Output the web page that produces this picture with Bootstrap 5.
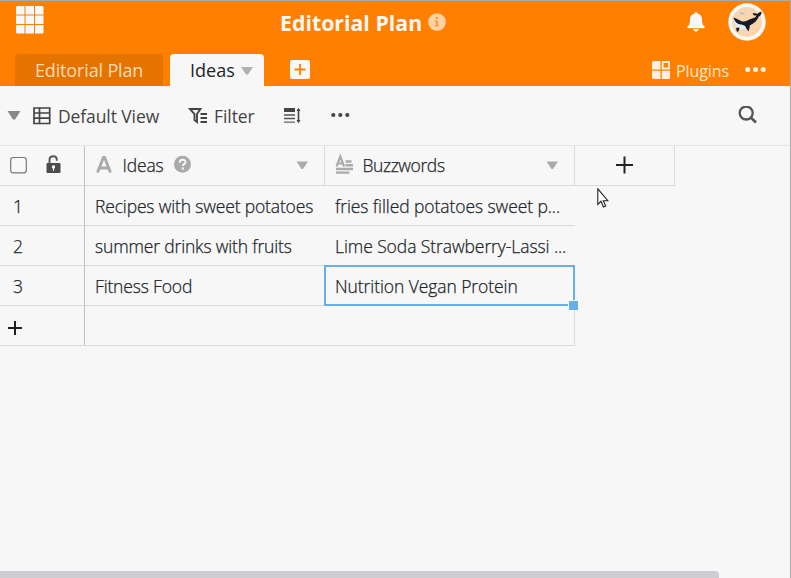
<!DOCTYPE html>
<html lang="en">
<head>
<meta charset="utf-8">
<title>Editorial Plan</title>
<link href="https://cdn.jsdelivr.net/npm/bootstrap@5.3.0/dist/css/bootstrap.min.css" rel="stylesheet">
<style>
body{font-family:"Open Sans","Noto Sans",sans-serif;background:#f7f7f7;color:#212529;font-size:17.5px;line-height:24px}
svg{display:block;flex:none}
.app{width:791px;height:578px;border-top:1px solid #aaa;border-right:1px solid #aaa}
.topbar{background:#ff8000;height:85px}
.brandrow{height:53px}
.brand-side{width:280px}
.apps-icon{margin:5px 0 0 16px}
.doc-title{font-weight:700;font-size:21.3px;color:#f7f7f7;line-height:44px}
.info-icon{margin:12px 0 0 6px}
.bell-icon{margin-top:11px}
.avatar-icon{margin:2px 24px 0 23px}
.tabs{height:32px;padding-left:15px;font-size:18px}
.tab-item{height:32px;border-radius:4px 4px 0 0;line-height:33px}
.tab-plan{width:148px;background:#e57300;color:#ffdcb8;margin-right:7px;padding-left:20px;letter-spacing:-.15px}
.tab-ideas{width:94px;background:#f7f7f7;padding-left:20px}
.tab-arrow{margin:13px 0 0 6px}
.plugins-icon{margin:7px 0 0}
.plugins-label{font-size:16px;line-height:35px;color:#ffe9d2;margin-left:6px;letter-spacing:-.1px}
.tools{height:59px;color:#444;padding-left:7px}
.tools span{font-weight:500;line-height:61px;padding-top:2px}
.view-name{letter-spacing:-.1px;margin-left:3px}
.filter-name{margin-left:5px;margin-right:-1px;letter-spacing:-.1px}
.grid-row{height:40px}
.cell{height:40px;border-bottom:1px solid #dbdbdb;line-height:41px;white-space:nowrap;font-weight:300;-webkit-text-stroke:.25px #212529}
.c-num{width:85px;border-right:1px solid #c1c1c1;padding-left:13px}
.c-num.has-icons{padding-left:0}
.c-a{width:240px;padding-left:10px;letter-spacing:-.16px}
.c-b{width:250px;padding-left:10px;letter-spacing:-.08px}
.c-add{width:100px}
.vline{border-right:1px solid #dbdbdb}
.head-row{border-top:1px solid #e6e6e6;height:41px}
.col-name{line-height:39px;margin-left:-.5px}
.c-b .col-name{letter-spacing:-.4px}
.selected{width:251px;height:41px;left:-1px;top:-1px;border:2px solid #66afe9}
.knob{width:11px;height:11px;right:-6px;bottom:-7px;background:#66afe9;border:1px solid #f7f7f7}
.pointer{left:597px;top:187px}
.scroll-thumb{width:719px;height:7px;background:#cdcdd2;border-top-right-radius:4px}
</style>
<script src="https://cdn.jsdelivr.net/npm/bootstrap@5.3.0/dist/js/bootstrap.bundle.min.js"></script>
</head>
<body class="overflow-hidden">
<div class="app d-flex flex-column position-relative">
  <header class="topbar">
    <div class="brandrow d-flex">
      <div class="brand-side">
        <svg class="apps-icon" width="28" height="28" viewBox="0 0 28 28" fill="#f7f7f7"><path d="M1 0h7.500v8.500H0V1zM9.500 0H18v8.500H9.500zM19 0h7.500l1 1v7.500H19zM0 9.500h8.500V18H0zM9.500 9.500H18V18H9.500zM19 9.500h8.500V18H19zM0 19h8.500v8.500H1l-1-1zM9.500 19H18v8.500H9.500zM19 19h8.500v7.500l-1 1H19z"/></svg>
      </div>
      <div class="doc-title">Editorial Plan</div>
      <svg class="info-icon" width="18" height="18" viewBox="0 0 18 18"><circle cx="9" cy="9" r="8.800" fill="#ffd3a6"/><path d="M7.600 4h2.300v2.100H7.600zM6.800 7.600h3.100v4.600h1v1.400H6.800v-1.400h1V9h-1z" fill="#ff9a38"/></svg>
      <svg class="bell-icon ms-auto" width="18" height="20" viewBox="0 0 18 20" fill="#f7f7f7"><path d="M9 0c.8 0 1.300.5 1.300 1.400C13.300 2 15 4.200 15 7.200c0 4.300.8 5.800 2.300 7.100.7.700.5 2-.600 2H1.300c-1.100 0-1.300-1.300-.600-2C2.200 13 3 11.500 3 7.200c0-3 1.700-5.200 4.700-5.800C7.700.5 8.200 0 9 0zM6.300 17.300h5.400C11.600 18.600 10.500 19.500 9 19.500s-2.600-.9-2.700-2.200z"/></svg>
      <svg class="avatar-icon" width="38" height="38" viewBox="0 0 38 38"><circle cx="19" cy="19" r="18.700" fill="#f7f7f7"/><circle cx="19" cy="19" r="15" fill="#fbd5ad"/><path d="M5 16c1 5 4 10 10 10.500 5 0 8-3 11-8.500l-9 2z" fill="#dcebf5"/><path d="M5.500 14.500c3 .5 5 2.500 8.500 4 4 .8 7-2.500 10-3 2.500-.5 4-1.500 4.500-3-2 .3-3.500-.6-4-2 2-.6 4-.4 5.200.5.600-1.300 1.900-2.100 3.800-2.200.3 1.900-.7 3.900-2.700 4.700-1.300 3.500-4 6.700-9 9-.1 2.200-.5 4.200-1.400 5.700-1.400-1.700-2.600-3.400-3.300-5.200-2-1-3-1.500-4.100-1.500-3.500 0-6.500-3-7.500-7z" fill="#151a26"/><path d="M8 25l3.500-.6-.8 3.500-1.700 1z" fill="#151a26"/><path d="M12 10.500c1-1.500 2-.5 2 1 .5-1.500 2-1.500 2.500-.5" fill="none" stroke="#9ec3df" stroke-width="1.300"/></svg>
    </div>
    <nav class="tabs d-flex">
      <div class="tab-item tab-plan">Editorial Plan</div>
      <div class="tab-item tab-ideas d-flex align-items-start"><span>Ideas</span><svg class="tab-arrow" width="12" height="8" viewBox="0 0 12 8"><path d="M0 0h12L7 7.500H5z" fill="#b0b0b0"/></svg></div>
      <svg class="ms-4 mt-1" width="24" height="24" viewBox="0 0 24 24"><rect x="2" y="2" width="20" height="19" rx="2.500" fill="#f7f7f7"/><path d="M12 6v11M6.500 11.500h11" stroke="#ff8000" stroke-width="1.800"/></svg>
      <div class="ms-auto d-flex">
        <svg class="plugins-icon" width="18" height="18" viewBox="0 0 18 18" fill="#fff0e0"><path d="M0 1l1-1h7.500v8.500H0zM0 9.800h8.500V18H1l-1-1zM9.800 9.800H18V17l-1 1H9.800z"/><path d="M10.700 1h6.300v6.500h-6.300z" fill="none" stroke="#fff0e0" stroke-width="1.800"/></svg>
        <span class="plugins-label">Plugins</span>
        <svg class="ms-3 me-4 mt-1" width="21" height="24" viewBox="0 0 21 24" fill="#fff0e0"><circle cx="2.700" cy="11.500" r="2.500"/><circle cx="10.500" cy="11.500" r="2.500"/><circle cx="18.200" cy="11.500" r="2.500"/></svg>
      </div>
    </nav>
  </header>

  <div class="tools d-flex align-items-center">
    <svg width="14" height="9" viewBox="0 0 14 9"><path d="M.5 0h13L8 8.500H6z" fill="#888"/></svg>
    <svg class="ms-2" width="26" height="18" viewBox="0 0 26 18" fill="none" stroke="#444" stroke-width="1.700"><path d="M5 1h15.700v15.500H5zM5 6h16M5 11.200h16M10.500 1v15.500"/></svg>
    <span class="view-name">Default View</span>
    <svg width="50" height="18" viewBox="0 0 50 18"><path d="M31 2h10.500L38 7v8l-2.500-2V7z" fill="none" stroke="#444" stroke-width="1.900"/><path d="M41.500 7H48M41.500 11H48M41.500 15H48" stroke="#444" stroke-width="2"/></svg>
    <span class="filter-name">Filter</span>
    <svg width="48" height="18" viewBox="0 0 48 18"><path d="M30 1h11v4H30z" fill="#444"/><path d="M30 8h11M30 11.500h11" stroke="#555" stroke-width="1.300"/><path d="M30 15.200h11" stroke="#888" stroke-width="1.700"/><path d="M44.500 2v13" stroke="#444" stroke-width="1.600"/><path d="M42.500 4l2-3.200 2 3.200zM42.500 13l2 3.200 2-3.200z" fill="#444"/></svg>
    <svg width="49" height="18" viewBox="0 0 49 18" fill="#444"><circle cx="31.300" cy="8" r="2.100"/><circle cx="38.300" cy="8" r="2.100"/><circle cx="45.300" cy="8" r="2.100"/></svg>
    <svg class="ms-auto me-4" width="29" height="20" viewBox="0 0 29 20" fill="none" stroke="#555"><circle cx="9.200" cy="7" r="6.500" stroke-width="2.300"/><path d="M13.700 11.500l5.300 5" stroke-width="2.700"/></svg>
  </div>

  <main class="flex-grow-1">
    <div class="grid-row head-row d-flex">
      <div class="cell c-num has-icons d-flex">
        <svg width="70" height="38" viewBox="0 0 70 38"><rect x="10.700" y="11.500" width="15.600" height="15.300" rx="2.500" fill="#f9f9f9" stroke="#777" stroke-width="1.200"/><path d="M49.500 17.500V14c0-2.200 1.400-3.700 3.700-3.700 2.200 0 3.600 1.400 3.600 3.400v1" fill="none" stroke="#555" stroke-width="1.900"/><rect x="46.500" y="17" width="14" height="10" rx="1" fill="#4c4c4c"/><path d="M52 19.500h3v2.500l-1 .8V25h-1v-2.200l-1-.8z" fill="#f7f7f7"/></svg>
      </div>
      <div class="cell c-a vline d-flex">
        <svg width="28" height="38" viewBox="0 0 28 38"><path d="M2.500 26.500L8.400 11.500h1.200l5.900 15M5 22h8" fill="none" stroke="#aaa" stroke-width="2.900"/></svg>
        <span class="col-name">Ideas</span>
        <svg class="ms-2" width="20" height="38" viewBox="0 0 20 38"><circle cx="10.500" cy="18.200" r="8.500" fill="#aaa"/><path d="M7.700 16.700c0-4 5.800-3.900 5.800-.7 0 2.200-2.700 2-2.700 4" fill="none" stroke="#f7f7f7" stroke-width="2"/><rect x="9.700" y="21.400" width="2.200" height="2.200" fill="#f7f7f7"/></svg>
        <svg class="ms-auto me-3" width="12" height="38" viewBox="0 0 12 38"><path d="M.5 15.500h11.500L7 23H5.500z" fill="#aaa"/></svg>
      </div>
      <div class="cell c-b vline d-flex">
        <svg width="28" height="38" viewBox="0 0 28 38" fill="none" stroke="#aaa"><path d="M1.500 20.500L5.300 10.500l3.800 10M3 17.500h5" stroke-width="2.200"/><path d="M10.500 15.500h6M10.500 19.300h7.500M1 23h17M1 26.600h13.500" stroke-width="2.400"/></svg>
        <span class="col-name">Buzzwords</span>
        <svg class="ms-auto me-3" width="12" height="38" viewBox="0 0 12 38"><path d="M.5 15.500h11.500L7 23H5.500z" fill="#aaa"/></svg>
      </div>
      <div class="cell c-add vline d-flex justify-content-center"><svg width="18" height="38" viewBox="0 0 18 38"><path d="M8.500 10.500v17M0 19h17" stroke="#222" stroke-width="2"/></svg></div>
    </div>
    <div class="grid-row d-flex"><div class="cell c-num">1</div><div class="cell c-a">Recipes with sweet potatoes</div><div class="cell c-b">fries filled potatoes sweet p...</div></div>
    <div class="grid-row d-flex"><div class="cell c-num">2</div><div class="cell c-a">summer drinks with fruits</div><div class="cell c-b">Lime Soda Strawberry-Lassi ...</div></div>
    <div class="grid-row d-flex"><div class="cell c-num">3</div><div class="cell c-a">Fitness Food</div><div class="cell c-b position-relative">Nutrition Vegan Protein<div class="selected position-absolute"><div class="knob position-absolute"></div></div></div></div>
    <div class="grid-row d-flex"><div class="cell c-num has-icons"><svg width="30" height="39" viewBox="0 0 30 39"><path d="M15 15v14M8 22h14" stroke="#222" stroke-width="2"/></svg></div><div class="cell c-a"></div><div class="cell c-b vline"></div></div>
  </main>
  <div class="scroll-thumb"></div>
  <svg class="pointer position-absolute" width="14" height="21" viewBox="0 0 14 21"><path d="M.8.800v15.700l3.200-3.200 2.500 5.700 2.200-1-2.400-5.300h4.500z" fill="#fff" stroke="#222" stroke-width="1.100"/></svg>
</div>
</body>
</html>
